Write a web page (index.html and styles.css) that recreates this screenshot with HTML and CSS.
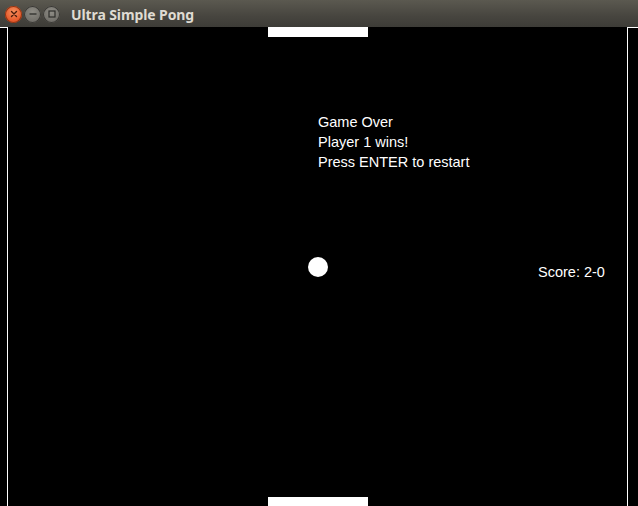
FILE: index.html
```html
<!DOCTYPE html>
<html>
<head>
<meta charset="utf-8">
<title>Ultra Simple Pong</title>
<link rel="stylesheet" href="styles.css">
</head>
<body>
<div class="window">
  <div class="titlebar">
    <div class="buttons">
      <span class="btn close">
        <svg width="8" height="8" viewBox="0 0 8 8"><path d="M1.5 1.5 L6.5 6.5 M6.5 1.5 L1.5 6.5" stroke="#4a1c0c" stroke-width="1.4" stroke-linecap="round"/></svg>
      </span>
      <span class="btn">
        <svg width="8" height="8" viewBox="0 0 8 8"><path d="M0.5 4 H7.5" stroke="#2e2d2a" stroke-width="1.3"/></svg>
      </span>
      <span class="btn">
        <svg width="8" height="8" viewBox="0 0 8 8"><rect x="1" y="1" width="6" height="6" fill="none" stroke="#2e2d2a" stroke-width="1.2"/></svg>
      </span>
    </div>
    <div class="title">Ultra Simple Pong</div>
  </div>
  <div class="canvas">
    <div class="wall wall-left"></div>
    <div class="wall wall-right"></div>
    <div class="paddle paddle-top"></div>
    <div class="paddle paddle-bottom"></div>
    <div class="message">
      <div>Game Over</div>
      <div>Player 1 wins!</div>
      <div>Press ENTER to restart</div>
    </div>
    <div class="ball"></div>
    <div class="score">Score: 2-0</div>
  </div>
</div>
</body>
</html>
```
FILE: styles.css
```css
html, body {
  margin: 0;
  padding: 0;
  background: #000;
  overflow: hidden;
}
.window {
  width: 638px;
  height: 506px;
  display: flex;
  flex-direction: column;
}
.titlebar {
  height: 27px;
  flex: 0 0 27px;
  background: linear-gradient(#5b5950, #47453f 60%, #3d3c37);
  display: flex;
  align-items: center;
  box-sizing: border-box;
  padding-left: 5px;
}
.buttons {
  display: flex;
  gap: 2px;
  margin-top: 1px;
}
.btn {
  flex: 0 0 17px;
  width: 17px;
  height: 17px;
  border-radius: 50%;
  background: radial-gradient(circle at 50% 35%, #8e8c85, #716f69 70%, #62615b);
  box-shadow: inset 0 0 0 1px #3a3935;
  display: flex;
  align-items: center;
  justify-content: center;
}
.btn.close {
  background: radial-gradient(circle at 50% 35%, #f7915f, #e6592b 65%, #cc451d);
  box-shadow: inset 0 0 0 1px #8e3414;
}
.title {
  margin-left: 11px;
  font-family: "Noto Sans", "DejaVu Sans", sans-serif;
  font-weight: bold;
  font-size: 14px;
  color: #dfdbd2;
  letter-spacing: -0.1px;
  margin-top: 1px;
}
.canvas {
  position: relative;
  flex: 1;
  background: #000;
  overflow: hidden;
  font-family: "Liberation Sans", Arial, sans-serif;
  font-size: 14.5px;
  color: #fff;
}
.wall {
  position: absolute;
  top: 0;
  height: 600px;
  border: 1px solid #fff;
  box-sizing: border-box;
}
.wall-left {
  left: -20px;
  width: 28px;
}
.wall-right {
  left: 627px;
  width: 40px;
}
.paddle {
  position: absolute;
  left: 268px;
  width: 100px;
  height: 10px;
  background: #fff;
}
.paddle-top {
  top: 0;
}
.paddle-bottom {
  top: 470px;
}
.message {
  position: absolute;
  left: 318px;
  top: 85px;
  line-height: 20px;
}
.ball {
  position: absolute;
  left: 308px;
  top: 230px;
  width: 20px;
  height: 20px;
  border-radius: 50%;
  background: #fff;
}
.score {
  position: absolute;
  left: 538px;
  top: 235px;
  line-height: 20px;
}
```
